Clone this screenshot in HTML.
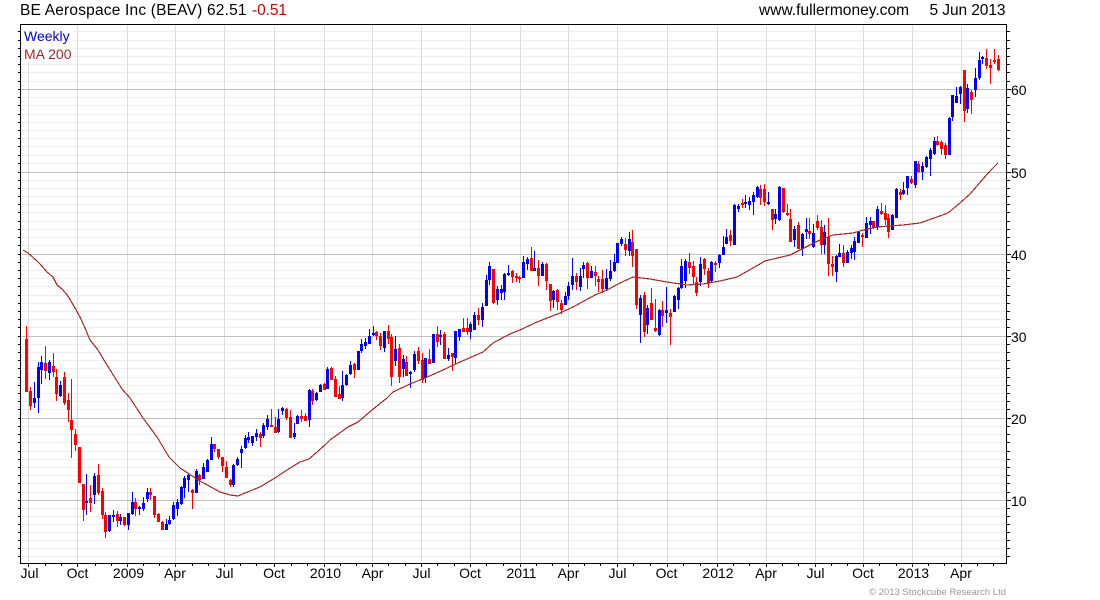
<!DOCTYPE html>
<html><head><meta charset="utf-8"><title>BE Aerospace Inc (BEAV)</title>
<style>html,body{margin:0;padding:0;background:#fff;width:1100px;height:600px;overflow:hidden}svg{display:block;font-family:"Liberation Sans",Arial,sans-serif}</style>
</head><body>
<svg width="1100" height="600" viewBox="0 0 1100 600" xmlns="http://www.w3.org/2000/svg">
<g shape-rendering="crispEdges" fill="none">
<path stroke="#eeeeee" d="M21 31.5H1006M21 40.5H1006M21 48.5H1006M21 56.5H1006M21 64.5H1006M21 72.5H1006M21 81.5H1006M21 97.5H1006M21 105.5H1006M21 114.5H1006M21 122.5H1006M21 130.5H1006M21 138.5H1006M21 146.5H1006M21 155.5H1006M21 163.5H1006M21 180.5H1006M21 188.5H1006M21 196.5H1006M21 204.5H1006M21 212.5H1006M21 221.5H1006M21 229.5H1006M21 237.5H1006M21 245.5H1006M21 262.5H1006M21 270.5H1006M21 278.5H1006M21 286.5H1006M21 295.5H1006M21 303.5H1006M21 311.5H1006M21 319.5H1006M21 327.5H1006M21 344.5H1006M21 352.5H1006M21 360.5H1006M21 368.5H1006M21 377.5H1006M21 385.5H1006M21 393.5H1006M21 401.5H1006M21 409.5H1006M21 426.5H1006M21 434.5H1006M21 442.5H1006M21 451.5H1006M21 459.5H1006M21 467.5H1006M21 475.5H1006M21 483.5H1006M21 492.5H1006M21 508.5H1006M21 516.5H1006M21 524.5H1006M21 532.5H1006M21 540.5H1006M21 548.5H1006M21 556.5H1006"/>
<path stroke="#dddddd" d="M28.5 25V563M77.5 25V563M127.5 25V563M175.5 25V563M224.5 25V563M274.5 25V563M324.5 25V563M372.5 25V563M421.5 25V563M470.5 25V563M520.5 25V563M568.5 25V563M617.5 25V563M667.5 25V563M717.5 25V563M766.5 25V563M815.5 25V563M863.5 25V563M912.5 25V563M961.5 25V563"/>
<path stroke="#c0c0c0" d="M21 89.5H1006M21 172.5H1006M21 254.5H1006M21 336.5H1006M21 418.5H1006M21 500.5H1006"/>
<rect x="21" y="25" width="52" height="37" fill="#fff"/>
<path stroke="#000" d="M20.5 24.5H1006.5V563.5H20.5Z"/>
<path stroke="#000" d="M18 31.5h2M18 40.5h2M18 48.5h2M18 56.5h2M18 64.5h2M18 72.5h2M18 81.5h2M18 89.5h2M18 97.5h2M18 105.5h2M18 114.5h2M18 122.5h2M18 130.5h2M18 138.5h2M18 146.5h2M18 155.5h2M18 163.5h2M18 172.5h2M18 180.5h2M18 188.5h2M18 196.5h2M18 204.5h2M18 212.5h2M18 221.5h2M18 229.5h2M18 237.5h2M18 245.5h2M18 254.5h2M18 262.5h2M18 270.5h2M18 278.5h2M18 286.5h2M18 295.5h2M18 303.5h2M18 311.5h2M18 319.5h2M18 327.5h2M18 336.5h2M18 344.5h2M18 352.5h2M18 360.5h2M18 368.5h2M18 377.5h2M18 385.5h2M18 393.5h2M18 401.5h2M18 409.5h2M18 418.5h2M18 426.5h2M18 434.5h2M18 442.5h2M18 451.5h2M18 459.5h2M18 467.5h2M18 475.5h2M18 483.5h2M18 492.5h2M18 500.5h2M18 508.5h2M18 516.5h2M18 524.5h2M18 532.5h2M18 540.5h2M18 548.5h2M18 556.5h2"/>
<path stroke="#000" d="M1007 31.5h3M1007 40.5h3M1007 48.5h3M1007 56.5h3M1007 64.5h3M1007 72.5h3M1007 81.5h3M1007 89.5h4M1007 97.5h3M1007 105.5h3M1007 114.5h3M1007 122.5h3M1007 130.5h3M1007 138.5h3M1007 146.5h3M1007 155.5h3M1007 163.5h3M1007 172.5h4M1007 180.5h3M1007 188.5h3M1007 196.5h3M1007 204.5h3M1007 212.5h3M1007 221.5h3M1007 229.5h3M1007 237.5h3M1007 245.5h3M1007 254.5h4M1007 262.5h3M1007 270.5h3M1007 278.5h3M1007 286.5h3M1007 295.5h3M1007 303.5h3M1007 311.5h3M1007 319.5h3M1007 327.5h3M1007 336.5h4M1007 344.5h3M1007 352.5h3M1007 360.5h3M1007 368.5h3M1007 377.5h3M1007 385.5h3M1007 393.5h3M1007 401.5h3M1007 409.5h3M1007 418.5h4M1007 426.5h3M1007 434.5h3M1007 442.5h3M1007 451.5h3M1007 459.5h3M1007 467.5h3M1007 475.5h3M1007 483.5h3M1007 492.5h3M1007 500.5h4M1007 508.5h3M1007 516.5h3M1007 524.5h3M1007 532.5h3M1007 540.5h3M1007 548.5h3M1007 556.5h3"/>
<path stroke="#000" d="M28.5 564v3M77.5 564v3M127.5 564v3M175.5 564v3M224.5 564v3M274.5 564v3M324.5 564v3M372.5 564v3M421.5 564v3M470.5 564v3M520.5 564v3M568.5 564v3M617.5 564v3M667.5 564v3M717.5 564v3M766.5 564v3M815.5 564v3M863.5 564v3M912.5 564v3M961.5 564v3M45.5 564v2M61.5 564v2M95.5 564v2M111.5 564v2M143.5 564v2M159.5 564v2M192.5 564v2M208.5 564v2M240.5 564v2M256.5 564v2M291.5 564v2M307.5 564v2M340.5 564v2M356.5 564v2M388.5 564v2M405.5 564v2M437.5 564v2M454.5 564v2M486.5 564v2M503.5 564v2M536.5 564v2M552.5 564v2M584.5 564v2M600.5 564v2M633.5 564v2M650.5 564v2M683.5 564v2M700.5 564v2M733.5 564v2M749.5 564v2M782.5 564v2M798.5 564v2M831.5 564v2M847.5 564v2M879.5 564v2M896.5 564v2M928.5 564v2M944.5 564v2M977.5 564v2M993.5 564v2"/>
<!-- red wicks -->
<path stroke="#ff0000" stroke-width="1" d="M26.5 326V392M30.5 387V410M45.5 346V379M53.5 353V377M56.5 369V401M64.5 372V405M68.5 393V422M71.5 379V458M75.5 429V451M79.5 447V483M83.5 484V521M90.5 485V512M98.5 464V495M102.5 488V519M105.5 512V538M117.5 511V527M124.5 517V526M135.5 498V516M150.5 488V500M154.5 496V518M158.5 513V522M162.5 521V530M192.5 489V509M199.5 474V485M214.5 444V452M218.5 449V459M222.5 457V472M226.5 461V478M230.5 479V487M260.5 432V447M271.5 409V427M275.5 417V433M286.5 408V420M290.5 410V438M301.5 410V422M305.5 413V421M312.5 389V405M324.5 383V390M331.5 367V380M335.5 376V397M339.5 386V399M354.5 363V378M376.5 331V340M380.5 333V350M388.5 325V344M391.5 334V386M399.5 344V383M406.5 356V376M418.5 347V364M422.5 353V383M429.5 349V364M437.5 326V347M444.5 332V359M452.5 353V371M463.5 318V332M467.5 318V335M478.5 308V325M493.5 269V304M512.5 270V283M516.5 273V282M519.5 276V283M531.5 247V271M538.5 260V286M546.5 263V290M550.5 284V311M557.5 289V310M561.5 300V314M576.5 273V290M587.5 262V289M595.5 266V286M598.5 276V292M602.5 270V293M625.5 238V256M632.5 230V267M636.5 249V309M644.5 292V337M651.5 288V320M655.5 299V332M662.5 301V327M670.5 309V345M689.5 253V274M693.5 261V285M696.5 277V296M704.5 258V275M708.5 268V288M715.5 261V272M730.5 230V246M742.5 199V208M760.5 185V205M764.5 184V206M772.5 209V230M783.5 188V213M787.5 204V216M790.5 209V242M798.5 222V249M809.5 218V239M817.5 215V230M821.5 220V254M828.5 218V276M832.5 256V276M843.5 245V267M862.5 233V247M873.5 221V229M881.5 203V215M885.5 205V225M888.5 214V238M900.5 189V200M911.5 176V184M918.5 161V173M937.5 136V146M941.5 140V155M945.5 143V159M964.5 70V122M971.5 90V114M986.5 49V69M990.5 59V84M994.5 49V64M998.5 55V71"/>
<!-- red bodies -->
<path stroke="#ff0000" stroke-width="3" d="M26.5 339V392M30.5 391V406M45.5 363V371M53.5 366V372M56.5 377V394M64.5 377V403M68.5 400V410M71.5 420V430M75.5 434V445M79.5 447V483M83.5 484V510M90.5 498V503M98.5 475V493M102.5 491V515M105.5 515V532M117.5 514V521M124.5 517V525M135.5 502V509M150.5 492V495M154.5 496V515M158.5 514V522M162.5 522V530M192.5 490V493M199.5 475V480M214.5 444V449M218.5 449V457M222.5 457V466M226.5 467V478M230.5 480V485M260.5 434V438M271.5 425V427M275.5 427V433M286.5 409V418M290.5 417V438M301.5 416V419M305.5 416V421M312.5 391V401M324.5 384V390M331.5 368V380M335.5 379V397M339.5 394V399M354.5 364V370M376.5 332V336M380.5 336V346M388.5 331V339M391.5 337V377M399.5 348V377M406.5 362V376M418.5 351V361M422.5 360V380M429.5 359V364M437.5 334V342M444.5 334V359M452.5 353V357M463.5 328V332M467.5 328V332M478.5 315V320M493.5 269V303M512.5 271V277M516.5 276V278M519.5 277V279M531.5 258V271M538.5 268V276M546.5 264V281M550.5 284V301M557.5 290V302M561.5 303V310M576.5 276V282M587.5 263V278M595.5 272V276M598.5 279V282M602.5 279V289M625.5 244V250M632.5 242V256M636.5 249V305M644.5 295V332M651.5 303V320M655.5 328V331M662.5 310V316M670.5 313V317M689.5 262V268M693.5 266V277M696.5 282V293M704.5 259V269M708.5 271V283M715.5 263V265M730.5 235V241M742.5 203V205M760.5 189V198M764.5 189V202M772.5 209V220M783.5 188V212M787.5 213V215M790.5 219V242M798.5 225V249M809.5 231V234M817.5 221V228M821.5 227V245M828.5 237V264M832.5 264V267M843.5 253V263M862.5 235V237M873.5 221V228M881.5 211V214M885.5 213V220M888.5 218V232M900.5 192V195M911.5 179V183M918.5 164V172M937.5 141V145M941.5 142V149M945.5 145V155M964.5 70V111M971.5 92V100M986.5 58V66M990.5 65V68M994.5 60V62M998.5 59V70"/>
<!-- blue wicks -->
<path stroke="#0000ff" stroke-width="1" d="M34.5 382V408M38.5 362V413M41.5 356V384M49.5 360V380M60.5 381V397M86.5 474V515M94.5 473V504M109.5 515V532M113.5 510V522M120.5 514V525M128.5 513V530M132.5 492V515M139.5 506V515M143.5 497V511M147.5 488V502M166.5 519V530M169.5 516V525M173.5 502V520M177.5 499V516M181.5 486V505M184.5 476V498M188.5 474V492M196.5 469V493M203.5 463V479M207.5 459V472M211.5 437V460M233.5 464V487M237.5 457V466M241.5 446V468M245.5 435V449M248.5 432V443M252.5 436V446M256.5 429V441M263.5 423V438M267.5 415V430M278.5 409V433M282.5 407V415M294.5 423V439M297.5 415V424M309.5 389V427M316.5 392V401M320.5 384V392M327.5 367V389M342.5 371V401M346.5 374V386M350.5 361V375M358.5 351V370M361.5 339V353M365.5 338V349M369.5 329V344M373.5 326V336M384.5 331V352M395.5 336V366M403.5 355V377M410.5 371V388M414.5 351V372M425.5 358V383M433.5 334V363M440.5 330V345M448.5 348V361M455.5 331V364M459.5 329V341M470.5 322V339M474.5 312V330M482.5 303V327M486.5 275V306M489.5 262V285M497.5 286V305M501.5 285V300M504.5 273V300M508.5 265V276M523.5 256V278M527.5 257V270M534.5 251V271M542.5 262V276M553.5 290V308M565.5 292V305M568.5 282V300M572.5 258V290M580.5 268V291M583.5 262V278M591.5 266V278M606.5 269V291M610.5 260V281M614.5 254V272M617.5 243V263M621.5 237V246M629.5 232V256M640.5 295V343M647.5 305V334M659.5 309V336M666.5 287V323M674.5 295V312M678.5 287V309M681.5 259V289M685.5 259V288M700.5 257V286M711.5 261V282M719.5 254V268M723.5 236V255M726.5 229V244M734.5 204V245M738.5 204V212M745.5 195V208M749.5 197V210M753.5 192V215M757.5 186V198M768.5 192V205M775.5 209V224M779.5 186V221M794.5 226V247M802.5 233V256M806.5 218V239M813.5 224V248M824.5 225V254M836.5 255V282M839.5 244V257M847.5 250V263M851.5 245V259M854.5 237V260M858.5 231V243M866.5 217V238M870.5 217V234M877.5 206V230M892.5 214V230M896.5 188V218M903.5 182V195M907.5 176V195M915.5 161V188M922.5 162V180M926.5 156V168M930.5 148V176M934.5 137V155M949.5 117V155M952.5 95V121M956.5 87V103M960.5 86V104M967.5 84V113M975.5 68V97M979.5 52V80M982.5 56V64"/>
<!-- blue bodies -->
<path stroke="#0000ff" stroke-width="3" d="M34.5 398V403M38.5 367V398M41.5 362V370M49.5 362V373M60.5 385V396M86.5 501V503M94.5 476V495M109.5 515V531M113.5 515V517M120.5 517V521M128.5 513V525M132.5 502V514M139.5 507V509M143.5 503V509M147.5 492V499M166.5 524V530M169.5 520V524M173.5 505V519M177.5 502V509M181.5 487V504M184.5 478V488M188.5 475V480M196.5 471V493M203.5 467V479M207.5 460V472M211.5 444V460M233.5 465V485M237.5 459V465M241.5 449V453M245.5 438V448M248.5 437V440M252.5 436V443M256.5 433V437M263.5 425V436M267.5 419V427M278.5 419V432M282.5 408V411M294.5 433V437M297.5 416V424M309.5 390V420M316.5 393V400M320.5 385V392M327.5 369V389M342.5 385V398M346.5 375V385M350.5 365V374M358.5 351V370M361.5 344V351M365.5 342V346M369.5 336V344M373.5 333V335M384.5 331V348M395.5 349V361M403.5 359V369M410.5 372V374M414.5 354V370M425.5 358V378M433.5 334V363M440.5 335V337M448.5 355V359M455.5 331V358M459.5 329V337M470.5 324V332M474.5 315V330M482.5 307V320M486.5 280V306M489.5 266V280M497.5 289V300M501.5 289V293M504.5 274V292M508.5 273V275M523.5 262V278M527.5 259V264M534.5 268V271M542.5 264V276M553.5 291V300M565.5 296V305M568.5 286V296M572.5 276V285M580.5 276V287M583.5 265V269M591.5 271V278M606.5 278V289M610.5 271V279M614.5 262V271M617.5 243V263M621.5 239V244M629.5 239V251M640.5 298V315M647.5 308V325M659.5 310V335M666.5 310V313M674.5 296V312M678.5 288V300M681.5 266V288M685.5 261V281M700.5 264V282M711.5 262V281M719.5 255V263M723.5 247V255M726.5 237V244M734.5 205V245M738.5 206V209M745.5 202V204M749.5 201V205M753.5 195V202M757.5 187V197M768.5 202V204M775.5 214V219M779.5 187V220M794.5 229V240M802.5 234V249M806.5 229V232M813.5 233V247M824.5 232V245M836.5 256V272M839.5 253V257M847.5 252V263M851.5 248V253M854.5 241V252M858.5 232V243M866.5 223V238M870.5 221V225M877.5 209V227M892.5 215V230M896.5 189V218M903.5 190V194M907.5 176V188M915.5 161V185M922.5 166V172M926.5 157V167M930.5 150V159M934.5 141V154M949.5 118V155M952.5 95V117M956.5 96V103M960.5 87V94M967.5 88V109M975.5 78V90M979.5 60V78M982.5 57V59"/>
<!-- MA 200 -->
<polyline stroke="#a52a2a" stroke-width="1.2" points="23,250 28,253 37,261 40,264 47,272 53,277 57,285 62,289 68,296 75,308 80,317 85,328 90,340 98,350 107,365 122,389 130,398 143,418 157,437 169,457 180,468 200,481 220,492 230,495 238,496 250,491 260,487 275,478 287,470 300,462 309,459 325,445 330,440 348,427 358,422 372,410 387,398 393,392 410,384 425,378 443,370 460,362 483,352 493,343 510,334 520,330 537,322 560,313 573,307 595,295 607,290 620,283 633,277 650,279 667,282 687,285 703,284 720,281 737,277 753,268 765,261 790,255 802,249 820,240 833,235 853,233 867,229 877,227 903,225 920,223 937,217 948,213 960,203 970,194 983,179 990,171 998,163"/>
</g>
<g font-size="15.5" fill="#000">
<text x="20" y="15" textLength="226.5" lengthAdjust="spacing">BE Aerospace Inc (BEAV) 62.51</text>
<text x="252" y="15" textLength="35" lengthAdjust="spacing" fill="#cc0000">-0.51</text>
<text x="759" y="15" textLength="150" lengthAdjust="spacing">www.fullermoney.com</text>
<text x="929.5" y="15" textLength="76" lengthAdjust="spacing">5 Jun 2013</text>
</g>
<text x="24" y="41" font-size="14" fill="#0000cc">Weekly</text>
<text x="24" y="59" font-size="14" fill="#a52a2a">MA 200</text>
<g font-size="14" fill="#000">
<text x="1011" y="95">60</text><text x="1011" y="178">50</text><text x="1011" y="260">40</text><text x="1011" y="342">30</text><text x="1011" y="424">20</text><text x="1011" y="506">10</text>
</g>
<g font-size="14" fill="#000" text-anchor="middle">
<text x="29.5" y="578">Jul</text><text x="77.5" y="578">Oct</text><text x="128.5" y="578">2009</text><text x="175" y="578">Apr</text><text x="224.5" y="578">Jul</text><text x="274" y="578">Oct</text><text x="325.5" y="578">2010</text><text x="372.5" y="578">Apr</text><text x="421.5" y="578">Jul</text><text x="470" y="578">Oct</text><text x="521.5" y="578">2011</text><text x="568.5" y="578">Apr</text><text x="617.5" y="578">Jul</text><text x="666.5" y="578">Oct</text><text x="718" y="578">2012</text><text x="766" y="578">Apr</text><text x="815.5" y="578">Jul</text><text x="863" y="578">Oct</text><text x="913.5" y="578">2013</text><text x="961" y="578">Apr</text>
</g>
<text x="869" y="595" font-size="9.5" fill="#999999" textLength="137" lengthAdjust="spacing">© 2013 Stockcube Research Ltd</text>
</svg>
</body></html>
